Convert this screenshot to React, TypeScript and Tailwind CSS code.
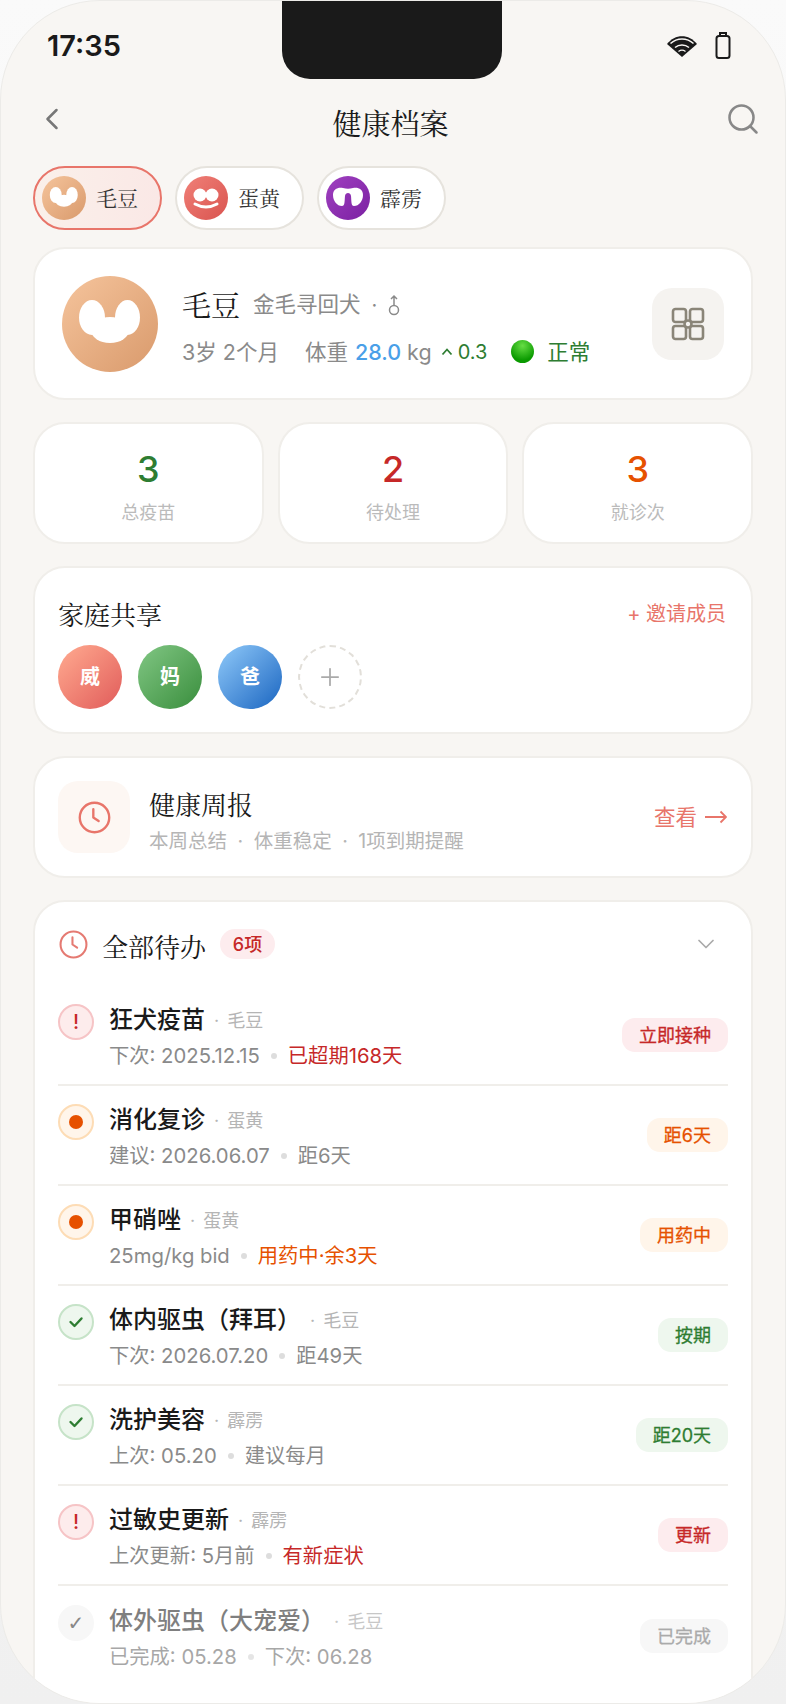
import { ChevronDown, ChevronLeft, Plus, Search } from "lucide-react";

const serif = "font-['Noto_Serif_CJK_SC']";

const MaodouFace = () => (
  <svg viewBox="0 0 96 96" className="h-full w-full">
    <ellipse cx="30" cy="41.500" rx="13" ry="17.500" fill="#fff" />
    <ellipse cx="65.500" cy="41.500" rx="12.500" ry="17.500" fill="#fff" />
    <ellipse cx="48" cy="54" rx="19" ry="13" fill="#fff" />
  </svg>
);

const DanhuangFace = () => (
  <svg viewBox="0 0 44 44" className="h-full w-full">
    <ellipse cx="16" cy="19" rx="6.500" ry="6.500" fill="#fff" />
    <ellipse cx="28" cy="19" rx="6.500" ry="6.500" fill="#fff" />
    <path d="M11 28q11 6 22 0" fill="none" stroke="#fff" strokeWidth="3" strokeLinecap="round" />
  </svg>
);

const PiliFace = () => (
  <svg viewBox="0 0 44 44" className="h-full w-full">
    <path
      d="M7 19C7 13 12 11 17 12Q22 13.500 27 12C32 11 37 13 37 19 37 25 33 30 28 30 25 30 25.500 25 25 20 24.700 16 19.300 16 19 20 18.500 25 19 30 16 30 11 30 7 25 7 19Z"
      fill="#fff"
    />
  </svg>
);

const pets = [
  { name: "毛豆", active: true, bg: "from-[#f5c49c] to-[#d99a6c]", face: <MaodouFace /> },
  { name: "蛋黄", active: false, bg: "from-[#f08078] to-[#d9534f]", face: <DanhuangFace /> },
  { name: "霹雳", active: false, bg: "from-[#a040c0] to-[#7b1fa2]", face: <PiliFace /> },
];

const stats = [
  { value: "3", label: "总疫苗", color: "text-[#2e7d32]" },
  { value: "2", label: "待处理", color: "text-[#c62828]" },
  { value: "3", label: "就诊次", color: "text-[#e65100]" },
];

const members = [
  { name: "威", bg: "from-[#ffab91] to-[#e05a5a]" },
  { name: "妈", bg: "from-[#81c784] to-[#388e3c]" },
  { name: "爸", bg: "from-[#90caf9] to-[#1565c0]" },
];

const tones = {
  red: { ring: "bg-[#fdecec] border-[#f6c4c6]", badge: "bg-[#fdecee] text-[#c62828]", text: "text-[#c62828]" },
  orange: { ring: "bg-[#fff5ea] border-[#fddcb5]", badge: "bg-[#fff5ea] text-[#e65100]", text: "text-[#e65100]" },
  green: { ring: "bg-[#eef7ee] border-[#c6e3c8]", badge: "bg-[#eef7ee] text-[#2e7d32]", text: "text-[#2e7d32]" },
  gray: { ring: "bg-[#f7f7f7] border-[#f7f7f7]", badge: "bg-[#f7f7f7] text-[#aaaaaa]", text: "text-[#999999]" },
};

type Tone = keyof typeof tones;

const todos: { title: string; pet: string; first: string; second: string; hot?: boolean; badge: string; tone: Tone }[] = [
  { title: "狂犬疫苗", pet: "毛豆", first: "下次: 2025.12.15", second: "已超期168天", hot: true, badge: "立即接种", tone: "red" },
  { title: "消化复诊", pet: "蛋黄", first: "建议: 2026.06.07", second: "距6天", badge: "距6天", tone: "orange" },
  { title: "甲硝唑", pet: "蛋黄", first: "25mg/kg bid", second: "用药中·余3天", hot: true, badge: "用药中", tone: "orange" },
  { title: "体内驱虫（拜耳）", pet: "毛豆", first: "下次: 2026.07.20", second: "距49天", badge: "按期", tone: "green" },
  { title: "洗护美容", pet: "霹雳", first: "上次: 05.20", second: "建议每月", badge: "距20天", tone: "green" },
  { title: "过敏史更新", pet: "霹雳", first: "上次更新: 5月前", second: "有新症状", hot: true, badge: "更新", tone: "red" },
  { title: "体外驱虫（大宠爱）", pet: "毛豆", first: "已完成: 05.28", second: "下次: 06.28", badge: "已完成", tone: "gray" },
];

const StatusIcon = ({ tone }: { tone: Tone }) => {
  if (tone === "red") {
    return <span className="text-[20px] leading-none font-medium text-[#c62828]">!</span>;
  }
  if (tone === "orange") {
    return <span className="h-[14px] w-[14px] rounded-full bg-[#e65100]" />;
  }
  if (tone === "green") {
    return (
      <svg viewBox="0 0 16 16" className="h-4 w-4" fill="none" stroke="#2e7d32" strokeWidth="2.400" strokeLinecap="round" strokeLinejoin="round">
        <path d="M2.500 8 6.500 12 13.500 4.500" />
      </svg>
    );
  }
  return <span className="font-['DejaVu_Sans',sans-serif] text-[20px] leading-none text-[#888888]">✓</span>;
};

const ClockIcon = ({ size, color }: { size: number; color: string }) => (
  <svg width={size} height={size} viewBox="0 0 28 28" fill="none" stroke={color} strokeWidth="2" strokeLinecap="round" strokeLinejoin="round">
    <circle cx="14" cy="14" r="12.500" />
    <path d="M13 7V14l4.500 3" />
  </svg>
);

const Card = ({ className, children }: { className: string; children: React.ReactNode }) => (
  <div className={`rounded-[32px] border-2 border-[#f0eeea] bg-white ${className}`}>{children}</div>
);

export default function App() {
  return (
    <div className="h-[1704px] w-[786px] bg-gradient-to-b from-[#fafafa] to-[#f0f0f0] font-['Inter','Noto_Sans_CJK_SC',sans-serif]">
      <div className="relative flex h-full flex-col overflow-hidden rounded-[100px] border border-[#ecebe8] bg-[#f8f6f3]">
        {/* notch */}
        <div className="absolute top-0 left-[281px] h-[78px] w-[220px] rounded-b-[28px] bg-[#1a1a1a]" />

        {/* status bar */}
        <div className="flex h-[89px] shrink-0 items-center justify-between pr-[54px] pl-[46px]">
          <span className="text-[29px] font-semibold text-[#1a1a1a]">17:35</span>
          <div className="flex items-center gap-[18px]">
            <svg width="30" height="22" viewBox="0 0 30 22">
              <path d="M0 9C8-1.500 22-1.500 30 9L15 22z" fill="#1a1a1a" />
              <g fill="none" stroke="#f8f6f3" strokeWidth="1.500">
                <path d="M3.500 8.500c6.500-6 16.500-6 23 0" />
                <path d="M8 12.500c4-3.500 10-3.500 14 0" />
              </g>
              <path d="M11.500 16.500c2-1.500 5-1.500 7 0" fill="none" stroke="#f8f6f3" strokeWidth="1.300" />
            </svg>
            <svg className="-translate-y-[1px]" width="16" height="28" viewBox="0 0 16 28" fill="none" stroke="#1a1a1a" strokeWidth="2">
              <rect x="1.500" y="5" width="13" height="22" rx="2.500" />
              <path d="M5 5V2h6v3" />
            </svg>
          </div>
        </div>

        {/* nav */}
        <div className="flex h-[76px] shrink-0 items-center justify-between pr-[24px] pl-[33px]">
          <ChevronLeft className="h-9 w-9 -translate-y-[9px] text-[#777777]" strokeWidth={1.7} />
          <h1 className={`-translate-x-[7px] -translate-y-[5px] text-[29px] font-normal text-[#1a1a1a] ${serif}`}>健康档案</h1>
          <Search className="h-[36px] w-[36px] -translate-y-[9px] text-[#888888]" strokeWidth={1.7} />
        </div>

        {/* pet pills */}
        <div className="flex shrink-0 gap-[13px] px-[32px]">
          {pets.map((pet) => (
            <div
              key={pet.name}
              className={`flex h-[64px] w-[129px] items-center gap-[10px] rounded-full border-2 pl-[7px] ${
                pet.active ? "border-[#e8756a] bg-gradient-to-r from-[#faf0ea] to-[#fae8e6]" : "border-[#e6e3dd] bg-white"
              }`}
            >
              <div className={`h-[44px] w-[44px] rounded-full bg-gradient-to-br ${pet.bg}`}>{pet.face}</div>
              <span className={`text-[21px] text-[#333333] ${serif}`}>{pet.name}</span>
            </div>
          ))}
        </div>

        <div className="mt-[17px] flex flex-col gap-[22px] pr-[32px] pl-[32px]">
          {/* profile */}
          <Card className="flex h-[153px] items-center pr-[27px] pl-[27px]">
            <div className="h-[96px] w-[96px] shrink-0 rounded-full bg-gradient-to-br from-[#f5c49c] to-[#d99a6c]">
              <MaodouFace />
            </div>
            <div className="ml-[24px] flex-1 pt-[3px]">
              <div className="flex items-center">
                <span className={`text-[29px] leading-[40px] text-[#1a1a1a] ${serif}`}>毛豆</span>
                <span className="ml-[13px] text-[21.500px] text-[#8a8a8a]">金毛寻回犬</span>
                <span className="mx-[11px] text-[20px] text-[#8a8a8a]">·</span>
                <svg width="12" height="22" viewBox="0 0 12 22" fill="none" stroke="#8a8a8a" strokeWidth="1.500">
                  <circle cx="6" cy="16" r="4.500" />
                  <path d="M6 11.500V2M3 5l3-3 3 3" />
                </svg>
              </div>
              <div className="mt-[13px] flex items-center text-[21.500px] leading-[28px] text-[#8a8a8a]">
                <span>3岁 2个月</span>
                <span className="ml-[26px]">体重</span>
                <span className="ml-[7px] font-medium text-[#4a9fe8]">28.0</span>
                <span className="ml-[6px]">kg</span>
                <svg className="ml-[9px]" width="12" height="10" viewBox="0 0 12 10" fill="none" stroke="#2e7d32" strokeWidth="1.800">
                  <path d="M1.500 7.500 6 2.500l4.500 5" />
                </svg>
                <span className="ml-[5px] text-[20px] text-[#2e7d32]">0.3</span>
                <span className="ml-[24px] h-[23px] w-[23px] rounded-full bg-[radial-gradient(circle_at_50%_25%,#66dd44,#0a9a00_70%)]" />
                <span className="ml-[13px] text-[#2e7d32]">正常</span>
              </div>
            </div>
            <div className="flex h-[72px] w-[72px] shrink-0 items-center justify-center rounded-[20px] bg-[#f5f3f0]">
              <svg width="34" height="34" viewBox="0 0 34 34" fill="none" stroke="#8a8578" strokeWidth="2.600">
                <rect x="2" y="2" width="13" height="13" rx="2.500" />
                <rect x="19" y="2" width="13" height="13" rx="2.500" />
                <rect x="2" y="19" width="13" height="13" rx="2.500" />
                <rect x="19" y="19" width="13" height="13" rx="2.500" />
                <circle cx="17" cy="17" r="3.500" />
              </svg>
            </div>
          </Card>

          {/* stats */}
          <div className="grid grid-cols-3 gap-[14px]">
            {stats.map((s) => (
              <Card key={s.label} className="flex h-[122px] flex-col items-center pt-[20px]">
                <span className={`text-[36px] leading-[50px] font-medium ${s.color}`}>{s.value}</span>
                <span className="mt-[6px] text-[18px] leading-[26px] text-[#bbbbbb]">{s.label}</span>
              </Card>
            ))}
          </div>

          {/* family */}
          <Card className="h-[168px] pt-[28px] pr-[25px] pl-[23px]">
            <div className="flex items-center justify-between">
              <span className={`text-[26px] leading-[36px] text-[#1a1a1a] ${serif}`}>家庭共享</span>
              <span className="text-[20px] text-[#e8756a]">+ 邀请成员</span>
            </div>
            <div className="mt-[13px] flex gap-[16px]">
              {members.map((m) => (
                <div key={m.name} className={`flex h-[64px] w-[64px] items-center justify-center rounded-full bg-gradient-to-br text-[20px] font-semibold text-white ${m.bg}`}>
                  {m.name}
                </div>
              ))}
              <div className="flex h-[64px] w-[64px] items-center justify-center rounded-full border-2 border-dashed border-[#e2dfd9]">
                <Plus className="h-7 w-7 text-[#aaaaaa]" strokeWidth={1.5} />
              </div>
            </div>
          </Card>

          {/* weekly report */}
          <Card className="flex h-[122px] items-center pr-[24px] pl-[23px]">
            <div className="flex h-[72px] w-[72px] shrink-0 items-center justify-center rounded-[20px] bg-[#fdf7f3]">
              <ClockIcon size={33} color="#e8756a" />
            </div>
            <div className="ml-[19px] flex-1 pt-[6px]">
              <div className={`text-[26px] leading-[36px] text-[#1a1a1a] ${serif}`}>健康周报</div>
              <div className="mt-[6px] flex text-[19.500px] leading-[26px] text-[#b5b5b5]">
                <span>本周总结</span>
                <span className="mx-[10.500px]">·</span>
                <span>体重稳定</span>
                <span className="mx-[10.500px]">·</span>
                <span>1项到期提醒</span>
              </div>
            </div>
            <span className="text-[21.500px] text-[#e8756a]">查看</span>
            <svg className="ml-[8px]" width="22" height="14" viewBox="0 0 22 14" fill="none" stroke="#e8756a" strokeWidth="1.800">
              <path d="M0 7h21M15.500 1.500 21 7l-5.500 5.500" />
            </svg>
          </Card>

          {/* todos */}
          <Card className="h-[840px] pt-[17px] pr-[23px] pl-[23px]">
            <div className="flex h-[50px] items-center">
              <span className="ml-[1px]">
                <ClockIcon size={29} color="#e57a72" />
              </span>
              <span className={`ml-[14px] translate-y-[2px] text-[26px] leading-[36px] text-[#1a1a1a] ${serif}`}>全部待办</span>
              <span className="ml-[14px] flex h-[30px] w-[55px] items-center justify-center rounded-full bg-[#fdecee] text-[18px] font-medium text-[#c62828]">
                6项
              </span>
              <ChevronDown className="mr-[8px] ml-auto h-7 w-7 text-[#aaaaaa]" strokeWidth={1.5} />
            </div>
            <div className="mt-[17px]">
              {todos.map((t, i) => {
                const tone = tones[t.tone];
                const done = t.tone === "gray";
                return (
                  <div key={t.title} className={`flex h-[100px] items-center border-[#f0eeea] ${i < todos.length - 1 ? "border-b-2" : ""}`}>
                    <div className={`flex h-[36px] w-[36px] shrink-0 -translate-y-[13px] items-center justify-center rounded-full border-2 ${tone.ring}`}>
                      <StatusIcon tone={t.tone} />
                    </div>
                    <div className={`ml-[15px] flex-1 pt-[3px] ${done ? "opacity-75" : ""}`}>
                      <div className="flex items-center">
                        <span className={`text-[24px] leading-[34px] font-medium ${done ? "text-[#555555]" : "text-[#1a1a1a]"}`}>{t.title}</span>
                        <span className="ml-[9px] text-[18px] text-[#b5b5b5]">·</span>
                        <span className="ml-[8px] text-[18px] text-[#b5b5b5]">{t.pet}</span>
                      </div>
                      <div className="mt-[5px] flex items-center text-[20.300px] leading-[28px] text-[#8a8a8a]">
                        <span>{t.first}</span>
                        <span className="mx-[11px] h-[6px] w-[6px] rounded-full bg-[#dddddd]" />
                        <span className={t.hot ? tone.text : ""}>{t.second}</span>
                      </div>
                    </div>
                    <span className={`flex h-[34px] items-center rounded-[13px] px-[17px] text-[18px] [-webkit-text-stroke:0.3px_currentColor] ${tone.badge}`}>{t.badge}</span>
                  </div>
                );
              })}
            </div>
          </Card>
        </div>
      </div>
    </div>
  );
}
